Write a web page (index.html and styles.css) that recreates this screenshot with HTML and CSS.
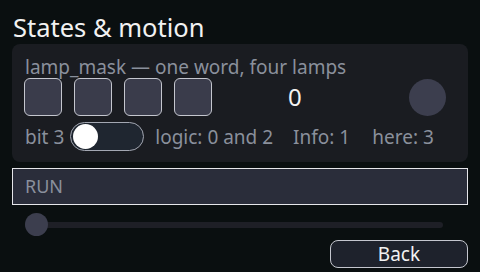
FILE: index.html
```html
<!DOCTYPE html>
<html lang="en">
<head>
    <meta charset="UTF-8">
    <meta name="viewport" content="width=device-width, initial-scale=1.0">
    <title>States &amp; motion</title>
    <link rel="stylesheet" href="styles.css">
</head>
<body>
    <h1 class="screen-title">States &amp; motion</h1>

    <div class="mask-panel">
        <p class="mask-caption">lamp_mask — one word, four lamps</p>

        <div class="lamp-row">
            <div class="lamps">
                <div class="lamp"></div>
                <div class="lamp"></div>
                <div class="lamp"></div>
                <div class="lamp"></div>
            </div>
            <span class="mask-value">0</span>
            <div class="status-dot"></div>
        </div>

        <div class="bit-row">
            <span class="bit-label">bit 3</span>
            <div class="toggle"><div class="toggle-knob"></div></div>
            <span class="bit-info logic">logic: 0 and 2</span>
            <span class="bit-info info">Info: 1</span>
            <span class="bit-info here">here: 3</span>
        </div>
    </div>

    <div class="run-field">RUN</div>

    <div class="slider">
        <div class="slider-track">
            <div class="slider-knob"></div>
        </div>
    </div>

    <div class="actions">
        <button class="back-btn">Back</button>
    </div>
</body>
</html>
```

FILE: styles.css
```css
* { margin: 0; padding: 0; box-sizing: border-box; }

body { font-family: 'Noto Sans', 'Open Sans', sans-serif; background: #0a0f10; color: #8a909c; width: 480px; height: 272px; padding: 0 12px; overflow: hidden; }

.screen-title { margin-top: 12px; height: 30px; line-height: 30px; font-size: 25.5px; font-weight: normal; color: #f2f2f2; padding-left: 1px; }

.mask-panel { margin-top: 2px; height: 118px; background: #1a1c21; border-radius: 8px; padding: 13px 12px 0 12px; }

.mask-caption { font-size: 19px; line-height: 20px; height: 20px; padding-left: 1px; }

.lamp-row { margin-top: 1px; height: 38px; display: flex; align-items: center; }

.lamps { display: flex; gap: 12px; }

.lamp { width: 38px; height: 38px; border: 1px solid #c4c6ce; border-radius: 6px; background: #3a3c4b; }

.mask-value { margin-left: 76px; font-size: 24px; color: #f2f2f2; line-height: 30px; }

.status-dot { margin-left: auto; margin-right: 10px; width: 37px; height: 37px; border-radius: 50%; background: #3c3e4e; }

.bit-row { margin-top: 6px; height: 29px; display: flex; align-items: center; font-size: 19px; }

.bit-label { padding-left: 1px; }

.toggle { margin-left: 6px; width: 74px; height: 29px; border: 1px solid #a3a7b2; border-radius: 15px; background: #1f2630; display: flex; align-items: center; padding: 0 2px; }

.toggle-knob { width: 25px; height: 25px; border-radius: 50%; background: #ffffff; }

.bit-info.logic { margin-left: 11px; }

.bit-info.info { margin-left: 20px; }

.bit-info.here { margin-left: 22px; }

.run-field { margin-top: 6px; height: 37px; border: 1px solid #e6e6ea; background: #2a2d3a; font-size: 18px; line-height: 35px; padding-left: 12px; }

.slider { margin-top: 8px; height: 23px; padding-left: 13px; display: flex; align-items: center; }

.slider-track { width: 418px; height: 6px; border-radius: 3px; background: #1e1f26; display: flex; align-items: center; }

.slider-knob { flex: none; width: 23px; height: 23px; border-radius: 50%; background: #3c3e4e; }

.actions { margin-top: 4px; display: flex; justify-content: flex-end; }

.back-btn { width: 138px; height: 28px; border: 1px solid #c4c6ce; border-radius: 8px; background: #1e222c; color: #f2f2f2; font-family: 'Noto Sans', 'Open Sans', sans-serif; font-size: 19px; line-height: 26px; }
```
